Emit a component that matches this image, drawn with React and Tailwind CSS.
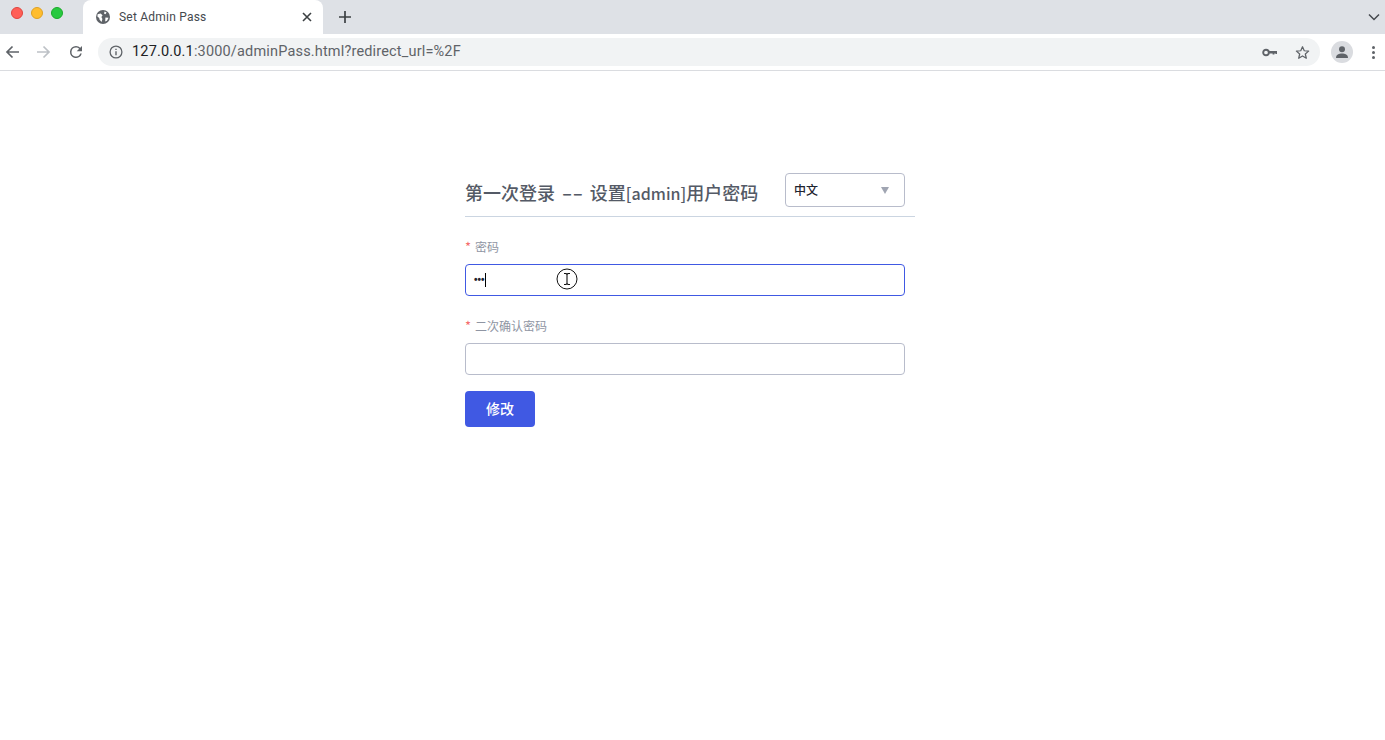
import React from "react";

const sans = "font-['Roboto','Noto_Sans_CJK_SC',sans-serif]";
const cjk = "font-['Noto_Sans_CJK_SC',sans-serif]";

function Chrome() {
  return (
    <div className={sans}>
      {/* tab strip */}
      <div className="h-[34px] bg-[#dee1e6] flex items-end relative">
        <div className="flex gap-2 pl-[11px] h-[34px] pt-[7px] w-[83px]">
          <span className="w-3 h-3 rounded-full bg-[#ff5f57] border border-[#e0443e]" />
          <span className="w-3 h-3 rounded-full bg-[#ffbd2e] border border-[#dea123]" />
          <span className="w-3 h-3 rounded-full bg-[#28c940] border border-[#1aab29]" />
        </div>
        <div className="w-[240px] h-[34px] bg-white rounded-t-lg flex items-center pl-[13px] pr-[11px]">
          <svg width="14" height="14" viewBox="0 0 14 14" className="shrink-0">
            <circle cx="7" cy="7" r="7" fill="#5f6368" />
            <path d="M1.6 4.2 L4.6 3.4 L6.6 5.2 L5.4 7 L6.4 9 L5.6 12 L3.6 9.8 L3.2 8 L1.4 6.4Z M8.6 1.4 L10.6 2.6 L9.4 4.2 L8 3.4Z M9.4 7.4 L12.6 7.8 L11 10.8 L9.2 11.6Z" fill="#fff" />
          </svg>
          <span className="ml-[9px] text-[12px] text-[#45494e] tracking-[0.22px] flex-1">Set Admin Pass</span>
          <svg width="10" height="10" viewBox="0 0 10 10"><path d="M1 1L9 9M9 1L1 9" stroke="#3c4043" strokeWidth="1.6" /></svg>
        </div>
        <div className="h-[34px] flex items-center pl-[16px]">
          <svg width="12" height="12" viewBox="0 0 12 12"><path d="M6 0V12M0 6H12" stroke="#3c4043" strokeWidth="1.7" /></svg>
        </div>
        <div className="ml-auto h-[34px] flex items-center pr-[5px]">
          <svg width="12" height="8" viewBox="0 0 12 8"><path d="M1 1.5L6 6.5L11 1.5" fill="none" stroke="#45494e" strokeWidth="1.5" /></svg>
        </div>
      </div>
      {/* toolbar */}
      <div className="h-[37px] bg-white border-b border-[#dadce0] flex items-center">
        <div className="w-[98px] flex items-center pl-[5px] shrink-0">
          <svg width="14" height="14" viewBox="0 0 14 14"><path d="M14 7H2M7.5 1.5L2 7L7.5 12.5" fill="none" stroke="#5f6368" strokeWidth="1.7" /></svg>
          <svg width="14" height="14" viewBox="0 0 14 14" className="ml-[18px]"><path d="M0 7H12M6.5 1.5L12 7L6.5 12.5" fill="none" stroke="#bdc1c6" strokeWidth="1.7" /></svg>
          <svg width="18" height="18" viewBox="0 0 24 24" className="ml-[16px]"><path d="M17.65 6.35A7.96 7.96 0 0 0 12 4a8 8 0 1 0 7.73 10h-2.08A6 6 0 1 1 12 6c1.66 0 3.14.69 4.22 1.78L13 11h7V4z" fill="#5f6368" /></svg>
        </div>
        <div className="w-[1222px] h-[28px] bg-[#f1f3f4] rounded-full flex items-center pl-[11px] pr-[11px] shrink-0">
          <svg width="14" height="14" viewBox="0 0 14 14">
            <circle cx="7" cy="7" r="5.9" fill="none" stroke="#5f6368" strokeWidth="1.3" />
            <path d="M7 6.2V10.2M7 3.8V5" stroke="#5f6368" strokeWidth="1.4" />
          </svg>
          <span className="ml-[9px] text-[14.5px] text-[#5f6368] tracking-[0.17px]"><span className="text-[#202124]">127.0.0.1</span>:3000/adminPass.html?redirect_url=%2F</span>
          <svg width="16" height="9" viewBox="0 0 16 9" className="ml-auto">
            <circle cx="4" cy="4.5" r="2.8" fill="none" stroke="#5f6368" strokeWidth="1.9" />
            <path d="M7 3H15V6H13.6V5.4H12.4V6.6H10.6V5.4H7Z" fill="#5f6368" />
          </svg>
          <svg width="15" height="15" viewBox="0 0 24 24" className="ml-[17px] mr-[-1px]"><path d="M12 2.8L14.8 9.2L21.8 9.8L16.5 14.4L18.1 21.2L12 17.6L5.9 21.2L7.5 14.4L2.2 9.8L9.2 9.2Z" fill="none" stroke="#5f6368" strokeWidth="2" strokeLinejoin="round" /></svg>
        </div>
        <div className="w-[22px] h-[22px] rounded-full bg-[#dadce0] ml-[11px] flex items-center justify-center shrink-0">
          <svg width="14" height="14" viewBox="0 0 14 14"><circle cx="7" cy="4.2" r="3" fill="#5f6368" /><path d="M1 13C1 9.5 4 8.5 7 8.5S13 9.5 13 13Z" fill="#5f6368" /></svg>
        </div>
        <div className="flex flex-col gap-[2px] ml-[19px]">
          <span className="w-[3px] h-[3px] rounded-full bg-[#5f6368]" />
          <span className="w-[3px] h-[3px] rounded-full bg-[#5f6368]" />
          <span className="w-[3px] h-[3px] rounded-full bg-[#5f6368]" />
        </div>
      </div>
    </div>
  );
}

function Label({ children }) {
  return (
    <div className="flex items-center h-[20px] text-[12px] leading-[20px] text-[#8f95a3]">
      <span className="text-[#f56c6c] w-[10px] text-[13px]">*</span>
      <span>{children}</span>
    </div>
  );
}

export default function App() {
  return (
    <div className={`h-[740px] bg-white overflow-hidden ${cjk}`}>
      <Chrome />
      <main className="w-[450px] ml-[465px] pt-[102px]">
        <div className="h-[44px] border-b border-[#cbd5e1] flex">
          <h1 className="text-[18px] leading-[24px] font-medium text-[#545a66] pt-[7px] w-[320px] whitespace-nowrap">第一次登录<span className="inline-block mx-[11px] scale-x-[1.65]">--</span>设置<span className="text-[16px]">[admin]</span>用户密码</h1>
          <div className="w-[120px] h-[34px] border border-[#b8bccb] rounded flex items-center pl-2 pr-[15px]">
            <span className="text-[12px] font-medium text-[#1f2430] flex-1">中文</span>
            <span className="w-0 h-0 border-x-[4.5px] border-x-transparent border-t-[7px] border-t-[#a0a5b2]" />
          </div>
        </div>
        <div className="mt-[20px]"><Label>密码</Label></div>
        <div className="relative mt-[7px] w-[440px] h-[32px] border border-[#4059e3] rounded flex items-center pl-2">
          <span className="font-['Liberation_Sans',sans-serif] text-[#1f2430] text-[10px] leading-none font-bold">•••</span>
          <span className="w-px h-[14px] bg-black" />
          <svg width="22" height="22" viewBox="0 0 22 22" className="absolute left-[90px] top-[3px]">
            <circle cx="11" cy="11" r="10" fill="#fff" stroke="#111" strokeWidth="1" />
            <path d="M8 5.5H10L11 6.5L12 5.5H14M11 6.5V15.5M8 16.5H10L11 15.5L12 16.5H14" fill="none" stroke="#111" strokeWidth="1.1" />
          </svg>
        </div>
        <div className="mt-[20px]"><Label>二次确认密码</Label></div>
        <div className="mt-[7px] w-[440px] h-[32px] border border-[#b8bccb] rounded" />
        <button className="mt-[16px] w-[70px] h-[36px] pb-[2px] rounded bg-[#4059e3] text-white text-[14px] font-medium block">修改</button>
      </main>
    </div>
  );
}
